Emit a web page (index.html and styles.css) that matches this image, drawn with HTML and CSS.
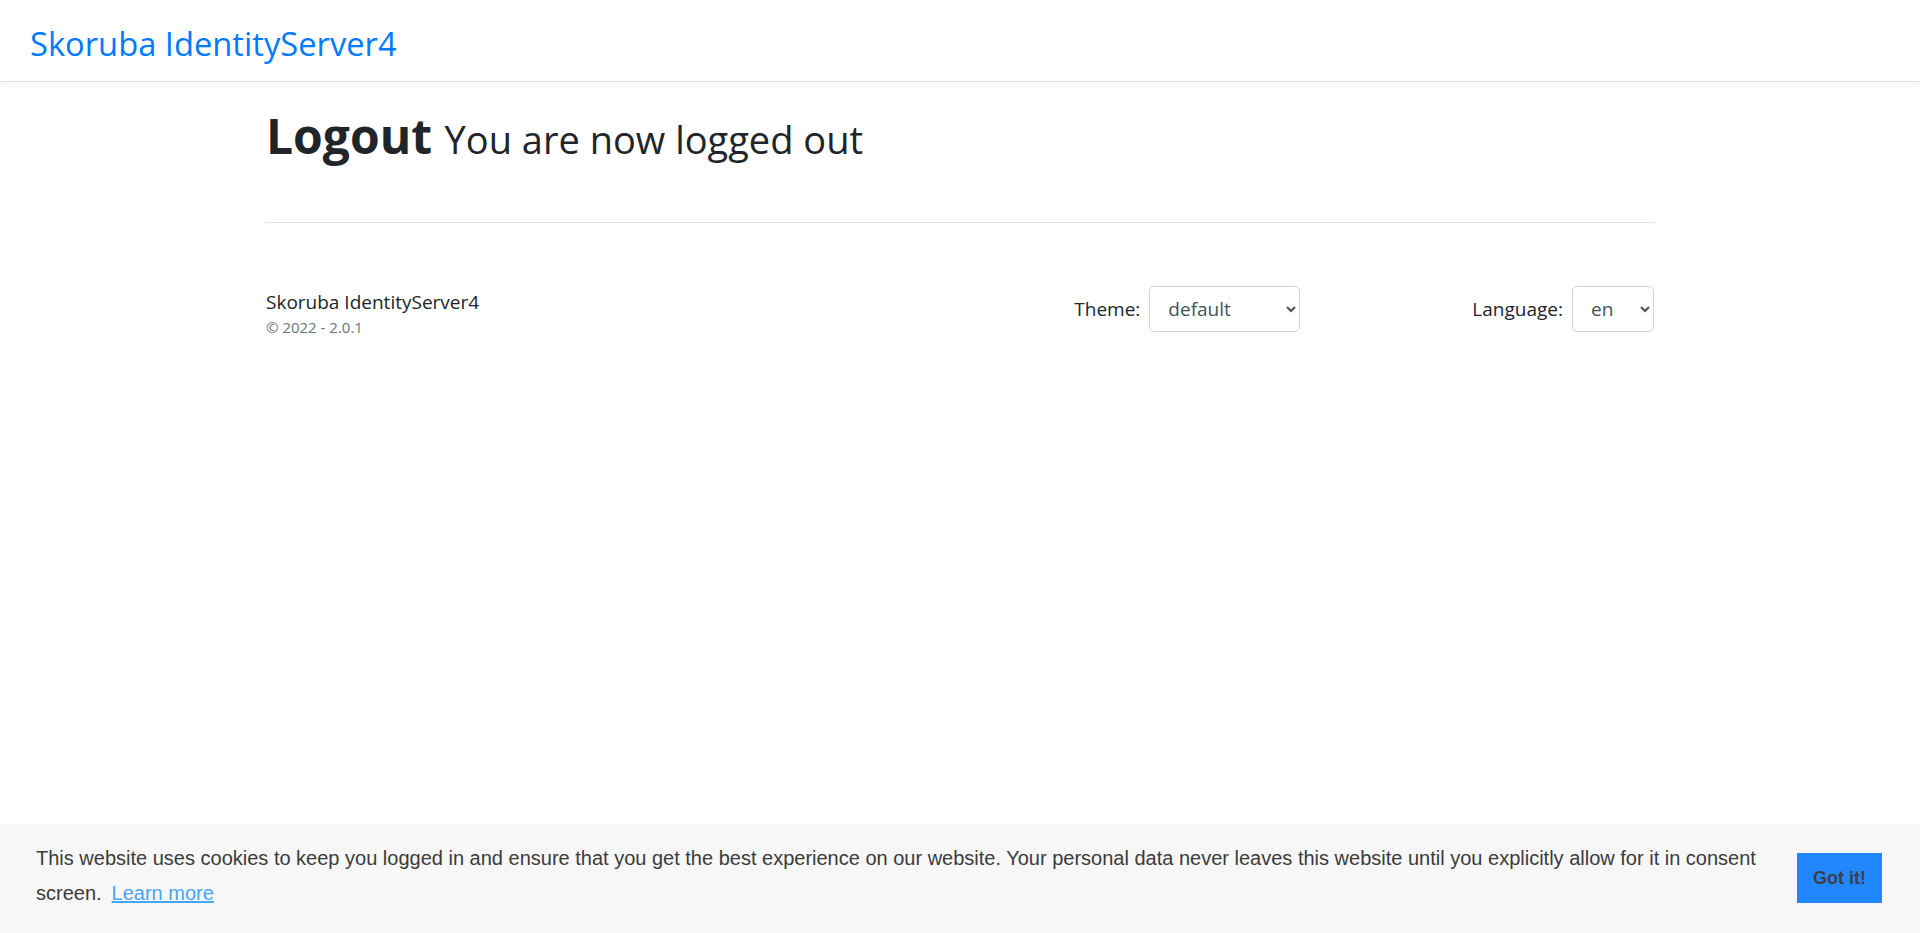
FILE: index.html
```html
<!DOCTYPE html>
<html lang="en">
<head>
<meta charset="utf-8">
<title>Skoruba IdentityServer4</title>
<link rel="stylesheet" href="styles.css">
</head>
<body>
<nav class="navbar">
  <a class="brand" href="#">Skoruba IdentityServer4</a>
</nav>
<main class="container">
  <div class="page-header">
    <h1 class="title">Logout <small class="subtitle">You are now logged out</small></h1>
  </div>
  <hr class="divider">
  <footer class="footer">
    <div class="footer-brand">
      <div class="footer-name">Skoruba IdentityServer4</div>
      <div class="footer-version">&copy; 2022 - 2.0.1</div>
    </div>
    <div class="picker picker-theme">
      <label class="picker-label" for="theme">Theme:</label>
      <select id="theme" class="picker-select select-theme">
        <option>default</option>
      </select>
    </div>
    <div class="picker picker-lang">
      <label class="picker-label" for="lang">Language:</label>
      <select id="lang" class="picker-select select-lang">
        <option>en</option>
      </select>
    </div>
  </footer>
</main>
<div class="cookie-banner">
  <span class="cookie-message">This website uses cookies to keep you logged in and ensure that you get the best experience on our website. Your personal data never leaves this website until you explicitly allow for it in consent screen.<a class="cookie-link" href="#">Learn more</a></span>
  <div class="cookie-compliance">
    <a class="cookie-btn" href="#">Got it!</a>
  </div>
</div>
</body>
</html>
```
FILE: styles.css
```css
* { box-sizing: border-box; }
html, body { margin: 0; padding: 0; }
body {
  font-family: "Open Sans", "Noto Sans", sans-serif;
  font-size: 20px;
  line-height: 1.5;
  color: #212529;
  background: #fff;
}
.navbar {
  height: 82px;
  display: flex;
  align-items: center;
  padding: 0 30px;
  border-bottom: 1px solid #dee2e6;
  box-shadow: 0 2px 10px rgba(0,0,0,0.04);
}
.brand {
  font-size: 32.7px;
  line-height: 1.2;
  color: #007bff;
  text-decoration: none;
  padding-top: 6px;
}
.container {
  width: 1388px;
  margin: 0 auto;
}
.page-header { padding-top: 25px; }
.title {
  margin: 0;
  font-size: 48px;
  font-weight: 700;
  line-height: 1.2;
}
.subtitle {
  font-size: 38px;
  font-weight: 400;
}
.divider {
  margin: 57px 0 0;
  border: 0;
  border-top: 1px solid rgba(0,0,0,0.12);
}
.footer {
  display: flex;
  align-items: center;
  padding-top: 58px;
}
.footer-brand { flex: 1; padding-top: 7px; }
.footer-name { font-size: 19px; line-height: 28px; }
.footer-version { font-size: 15px; line-height: 22px; color: #6c757d; }
.picker { display: flex; align-items: center; gap: 9px; }
.picker-theme { margin-right: 172px; }
.picker-label { font-size: 19px; }
.picker-select {
  height: 46px;
  font-family: inherit;
  font-size: 19px;
  color: #495057;
  background: #fff;
  border: 1px solid #ced4da;
  border-radius: 5px;
  padding: 0 10px 0 14px;
}
.select-theme { width: 151px; }
.select-lang { width: 82px; }
.cookie-banner {
  position: fixed;
  left: 0;
  right: 0;
  bottom: 0;
  display: flex;
  align-items: center;
  padding: 17px 38px 23px 36px;
  background: #f7f7f7;
  color: #3b3b3b;
  font-family: "Liberation Sans", Arial, sans-serif;
  font-size: 20px;
  line-height: 34.5px;
}
.cookie-message { flex: 1; margin-right: 20px; }
.cookie-link {
  color: #47a6f6;
  margin-left: 10px;
  text-decoration: underline;
}
.cookie-compliance { display: flex; margin-top: 4px; }
.cookie-btn {
  display: block;
  width: 85px;
  height: 50px;
  line-height: 50px;
  text-align: center;
  background: #2187fe;
  color: #3d4047;
  font-weight: 700;
  font-size: 18px;
  text-decoration: none;
}
```
